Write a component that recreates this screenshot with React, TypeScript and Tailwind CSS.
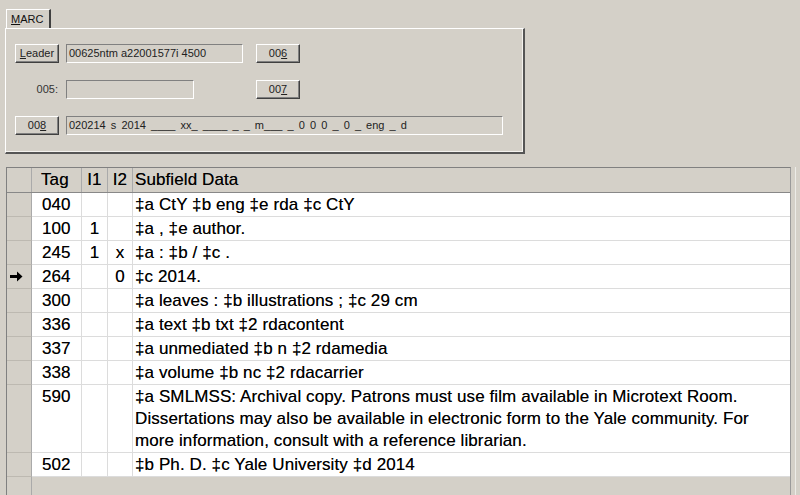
import React from 'react'

type Row = { tag: string; i1: string; i2: string; data: string[]; current?: boolean }

const rows: Row[] = [
  { tag: '040', i1: '', i2: '', data: ['‡a CtY ‡b eng ‡e rda ‡c CtY'] },
  { tag: '100', i1: '1', i2: '', data: ['‡a , ‡e author.'] },
  { tag: '245', i1: '1', i2: 'x', data: ['‡a : ‡b / ‡c .'] },
  { tag: '264', i1: '', i2: '0', data: ['‡c 2014.'], current: true },
  { tag: '300', i1: '', i2: '', data: ['‡a leaves : ‡b illustrations ; ‡c 29 cm'] },
  { tag: '336', i1: '', i2: '', data: ['‡a text ‡b txt ‡2 rdacontent'] },
  { tag: '337', i1: '', i2: '', data: ['‡a unmediated ‡b n ‡2 rdamedia'] },
  { tag: '338', i1: '', i2: '', data: ['‡a volume ‡b nc ‡2 rdacarrier'] },
  {
    tag: '590',
    i1: '',
    i2: '',
    data: [
      '‡a SMLMSS: Archival copy. Patrons must use film available in Microtext Room.',
      'Dissertations may also be available in electronic form to the Yale community. For',
      'more information, consult with a reference librarian.',
    ],
  },
  { tag: '502', i1: '', i2: '', data: ['‡b Ph. D. ‡c Yale University ‡d 2014'] },
]

function WinButton({ children, className = '' }: { children: React.ReactNode; className?: string }) {
  return (
    <div
      className={`h-[19px] w-[44px] flex items-center justify-center border border-t-white border-l-white border-r-[#404040] border-b-[#404040] shadow-[inset_-1px_-1px_0_#808080] bg-[#d4d0c8] text-[11px] text-[#222] ${className}`}
    >
      {children}
    </div>
  )
}

function Field({ value, width, className = '' }: { value: string; width: string; className?: string }) {
  return (
    <div
      className={`h-[19px] ${width} border border-t-[#808080] border-l-[#808080] border-r-white border-b-white bg-[#d4d0c8] flex items-center px-[2px] text-[11px] text-[#222] whitespace-pre ${className}`}
    >
      {value}
    </div>
  )
}

function Arrow() {
  return (
    <svg width="13" height="11" viewBox="0 0 13 11">
      <path d="M0 4h7V0.5L12.5 5.5 7 10.5V7H0z" fill="#000" />
    </svg>
  )
}

export default function App() {
  return (
    <div
      className="w-[800px] h-[495px] bg-[#d4d0c8] overflow-hidden relative"
      style={{ fontFamily: '"Liberation Sans", Arial, sans-serif' }}
    >
      {/* MARC tab + fixed fields panel */}
      <div className="pl-[5px] pt-[9px]">
        <div className="ml-[1px] w-[45px] h-[19px] border-t border-l border-white border-r-2 border-r-[#404040] flex items-center pl-[4px] text-[11px] text-[#111]">
          <span>
            <span className="underline">M</span>ARC
          </span>
        </div>
        <div className="w-[520px] h-[126px] border-t border-l border-white border-r-2 border-b-2 border-r-[#555] border-b-[#555] shadow-[inset_-1px_-1px_0_#f4f2ee] pl-[9px] pt-[15px] flex flex-col gap-[17px]">
          <div className="flex items-center">
            <WinButton>
              <span>
                <span className="underline">L</span>eader
              </span>
            </WinButton>
            <div className="ml-[7px]">
              <Field value="00625ntm a22001577i 4500" width="w-[177px]" />
            </div>
            <WinButton className="ml-[13px]">
              <span>
                00<span className="underline">6</span>
              </span>
            </WinButton>
          </div>
          <div className="flex items-center">
            <div className="w-[44px] text-right pr-[1px] text-[11px] text-[#333]">005:</div>
            <div className="ml-[7px]">
              <Field value="" width="w-[128px]" />
            </div>
            <WinButton className="ml-[62px]">
              <span>
                00<span className="underline">7</span>
              </span>
            </WinButton>
          </div>
          <div className="flex items-center">
            <WinButton>
              <span>
                00<span className="underline">8</span>
              </span>
            </WinButton>
            <div className="ml-[7px]">
              <Field
                value="020214  s  2014  ____  xx_  ____  _  _  m___  _  0  0  0  _  0  _  eng  _  d"
                width="w-[437px]"
                className="[word-spacing:-0.5px]"
              />
            </div>
          </div>
        </div>
      </div>

      {/* variable fields grid */}
      <div className="mt-[13px] ml-[6px] w-[785px] h-[330px] border-t border-l border-[#808080] border-r border-r-[#9a9a9a] flex flex-col text-[17px] tracking-[0.1px] text-black [text-shadow:0_0_0.3px_rgba(0,0,0,0.6)]">
        <div className="flex h-[25px] border-b border-[#888] bg-[#d4d0c8]">
          <div className="w-[25px] border-r border-[#aaa]" />
          <div className="w-[50px] border-r border-[#aaa] pl-[9px] flex items-center">Tag</div>
          <div className="w-[26px] border-r border-[#aaa] flex items-center justify-center">I1</div>
          <div className="w-[25px] border-r border-[#aaa] flex items-center justify-center">I2</div>
          <div className="flex-1 pl-[2px] flex items-center">Subfield Data</div>
        </div>
        {rows.map((r) => (
          <div key={r.tag} className="flex border-b border-[#dcdcdc]">
            <div className="w-[25px] bg-[#d4d0c8] border-r border-[#aaa] border-b border-b-[#bdb9b1] -mb-px flex items-start pt-[6px] pl-[3px]">
              {r.current && <Arrow />}
            </div>
            <div className="w-[50px] bg-white border-r border-[#dcdcdc] pl-[10px] leading-[23px]">{r.tag}</div>
            <div className="w-[26px] bg-white border-r border-[#dcdcdc] text-center leading-[23px]">{r.i1}</div>
            <div className="w-[25px] bg-white border-r border-[#dcdcdc] text-center leading-[23px]">{r.i2}</div>
            <div className="flex-1 bg-white pl-[2px] leading-[22px] pt-px">
              {r.data.map((line, i) => (
                <div key={i} className="whitespace-nowrap">
                  {line}
                </div>
              ))}
            </div>
          </div>
        ))}
        <div className="flex-1 flex">
          <div className="w-[25px] border-r border-[#aaa]" />
        </div>
      </div>
      <div className="absolute right-[4px] top-[167px] bottom-0 w-px bg-[#ecebe7]" />
    </div>
  )
}
